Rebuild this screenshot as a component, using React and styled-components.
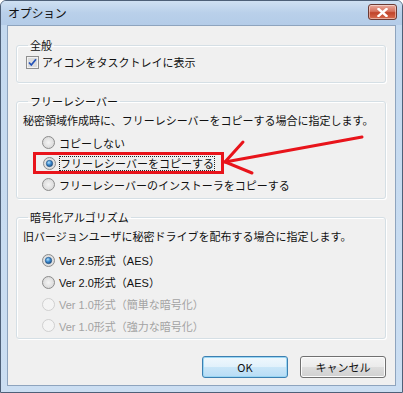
import React from "react";
import styled, { createGlobalStyle } from "styled-components";

const Global = createGlobalStyle`
  html, body { margin: 0; padding: 0; background: #fff; }
  body { font-family: "Noto Sans CJK JP", "Liberation Sans", sans-serif; }
`;

const Window = styled.div`
  position: relative;
  width: 403px;
  height: 393px;
  box-sizing: border-box;
  border: 1px solid #4e6078;
  border-radius: 6px 6px 0 0;
  background: linear-gradient(180deg, #b9d1ea 0px, #c4d9ef 24px, #cbdef2 100%);
  display: flex;
  flex-direction: column;
  overflow: hidden;
`;

const TitleBar = styled.div`
  height: 24px;
  display: flex;
  align-items: center;
  padding: 0 5px 0 7px;
  background: linear-gradient(180deg, #cfe0f2 0%, #b9d0ea 50%, #b4cce8 100%);
`;

const Title = styled.span`
  font-size: 12px;
  line-height: 14px;
  color: #111;
  letter-spacing: -0.3px;
`;

const CloseButton = styled.div`
  margin-left: auto;
  align-self: flex-start;
  margin-top: 3px;
  width: 29px;
  height: 16px;
  box-sizing: border-box;
  border: 1px solid #6b3a34;
  border-radius: 3px;
  background: linear-gradient(180deg, #e9a99c 0%, #d6735f 45%, #c0432a 55%, #d86c4f 100%);
  display: flex;
  align-items: center;
  justify-content: center;
  box-shadow: inset 0 0 0 1px rgba(255, 255, 255, 0.45);
`;

const Content = styled.div`
  margin: 0 6px;
  height: 361px;
  box-sizing: border-box;
  border: 1px solid #8ea4be;
  background: #f0f0f0;
  padding: 12px 9px 0 8px;
  display: flex;
  flex-direction: column;
  gap: 11px;
`;

const Group = styled.fieldset`
  margin: 0;
  padding: 0 8px 0 6px;
  border: 1px solid #d5dfe5;
  border-radius: 3px;
  box-shadow: inset 1px 1px 0 #fff, 1px 1px 0 #fff;
  height: ${(p) => p.$height}px;
  box-sizing: border-box;
  display: flex;
  flex-direction: column;
  min-width: 0;
`;

const Legend = styled.legend`
  font-size: 11px;
  line-height: 14px;
  padding: 0 2px;
  margin-left: 5px;
  color: #111;
`;

const Desc = styled.div`
  font-size: 11px;
  line-height: 16px;
  margin-top: 4px;
  color: #111;
  white-space: nowrap;
`;

const Options = styled.div`
  display: flex;
  flex-direction: column;
  margin-top: ${(p) => p.$top}px;
  padding-left: 19px;
`;

const Row = styled.label`
  display: flex;
  align-items: center;
  gap: 4px;
  height: ${(p) => p.$h}px;
  font-size: 11px;
  color: ${(p) => (p.$disabled ? "#a3a3a3" : "#111")};
  white-space: nowrap;
`;

const Highlight = styled.div`
  align-self: flex-start;
  margin-left: -9px;
  padding: 0 7px 0 7px;
  height: 22px;
  box-sizing: border-box;
  border: 3px solid #e8141b;
  display: flex;
  align-items: center;
`;

const FocusText = styled.span`
  outline: 1px dotted #222;
  outline-offset: 0;
  line-height: 13px;
`;

const CheckRow = styled.label`
  display: flex;
  align-items: center;
  gap: 3px;
  height: 16px;
  margin-top: 2px;
  padding-left: 3px;
  font-size: 11px;
  color: #111;
  white-space: nowrap;
`;

const Latin = styled.span`
  font-family: "Liberation Sans", "Noto Sans CJK JP", sans-serif;
`;

const Buttons = styled.div`
  display: flex;
  justify-content: flex-end;
  gap: 12px;
  margin-top: 6px;
`;

const Button = styled.div`
  width: 86px;
  height: 22px;
  box-sizing: border-box;
  border: 1px solid ${(p) => (p.$primary ? "#3c7fb1" : "#707070")};
  border-radius: 3px;
  background: ${(p) =>
    p.$primary
      ? "linear-gradient(180deg, #f0f8fd 0%, #e1f1fb 50%, #c9e6f8 51%, #b8dcf5 100%)"
      : "linear-gradient(180deg, #f4f4f4 0%, #ebebeb 50%, #dddddd 51%, #d0d0d0 100%)"};
  box-shadow: inset 0 0 0 1px ${(p) => (p.$primary ? "#9ad6f3" : "#fcfcfc")};
  display: flex;
  align-items: center;
  justify-content: center;
  font-size: 11px;
  color: #111;
`;

const Overlay = styled.svg`
  position: absolute;
  left: -1px;
  top: -1px;
  pointer-events: none;
`;

function Radio({ checked, disabled }) {
  return (
    <svg width="13" height="13" viewBox="0 0 13 13">
      <defs>
        <radialGradient id="rbg" cx="0.5" cy="0.5" r="0.6">
          <stop offset="0" stopColor="#f4f4f4" />
          <stop offset="1" stopColor="#d4d4d4" />
        </radialGradient>
        <radialGradient id="rdot" cx="0.4" cy="0.35" r="0.7">
          <stop offset="0" stopColor="#b5e2fb" />
          <stop offset="0.5" stopColor="#3a8ad0" />
          <stop offset="1" stopColor="#1b4c80" />
        </radialGradient>
      </defs>
      <circle
        cx="6.5"
        cy="6.5"
        r="6"
        fill={disabled ? "#f4f4f4" : "url(#rbg)"}
        stroke={disabled ? "#cfcfcf" : "#8c8c8c"}
      />
      {checked && <circle cx="6.5" cy="6.5" r="3.2" fill="url(#rdot)" stroke="#1f4e7d" strokeWidth="0.6" />}
    </svg>
  );
}

function Checkbox() {
  return (
    <svg width="13" height="13" viewBox="0 0 13 13">
      <rect x="0.5" y="0.5" width="12" height="12" fill="#f2f2f2" stroke="#8f8f8f" />
      <rect x="2" y="2" width="9" height="9" fill="#dcdcdc" />
      <path d="M3 6.5 L5.3 9 L10 3.3" fill="none" stroke="#2553b8" strokeWidth="1.8" />
    </svg>
  );
}

export default function App() {
  return (
    <>
      <Global />
      <Window>
        <TitleBar>
          <Title>オプション</Title>
          <CloseButton>
            <svg width="11" height="9" viewBox="0 0 11 9">
              <path d="M1.5 1 L9.5 8 M9.5 1 L1.5 8" stroke="#fff" strokeWidth="2.4" strokeLinecap="square" />
            </svg>
          </CloseButton>
        </TitleBar>
        <Content>
          <Group $height={45}>
            <Legend>全般</Legend>
            <CheckRow>
              <Checkbox />
              アイコンをタスクトレイに表示
            </CheckRow>
          </Group>

          <Group $height={105}>
            <Legend>フリーレシーバー</Legend>
            <Desc>秘密領域作成時に、フリーレシーバーをコピーする場合に指定します。</Desc>
            <Options $top={5}>
              <Row $h={19}>
                <Radio />
                コピーしない
              </Row>
              <Highlight>
                <Row $h={14}>
                  <Radio checked />
                  <FocusText>フリーレシーバーをコピーする</FocusText>
                </Row>
              </Highlight>
              <Row $h={21}>
                <Radio />
                フリーレシーバーのインストーラをコピーする
              </Row>
            </Options>
          </Group>

          <Group $height={129}>
            <Legend>暗号化アルゴリズム</Legend>
            <Desc>旧バージョンユーザに秘密ドライブを配布する場合に指定します。</Desc>
            <Options $top={5}>
              <Row $h={22}>
                <Radio checked />
                <span><Latin>Ver 2.5</Latin>形式（<Latin>AES</Latin>）</span>
              </Row>
              <Row $h={22}>
                <Radio />
                <span><Latin>Ver 2.0</Latin>形式（<Latin>AES</Latin>）</span>
              </Row>
              <Row $h={22} $disabled>
                <Radio disabled />
                <span><Latin>Ver 1.0</Latin>形式（簡単な暗号化）</span>
              </Row>
              <Row $h={21} $disabled>
                <Radio disabled />
                <span><Latin>Ver 1.0</Latin>形式（強力な暗号化）</span>
              </Row>
            </Options>
          </Group>

          <Buttons>
            <Button $primary>OK</Button>
            <Button>キャンセル</Button>
          </Buttons>
        </Content>
        <Overlay width="403" height="393" viewBox="0 0 403 393">
          <g stroke="#e8141b" strokeWidth="3" strokeLinecap="round" fill="none">
            <path d="M362 137 L225 162" />
            <path d="M243 142 L225 162 L252 173" />
          </g>
        </Overlay>
      </Window>
    </>
  );
}
